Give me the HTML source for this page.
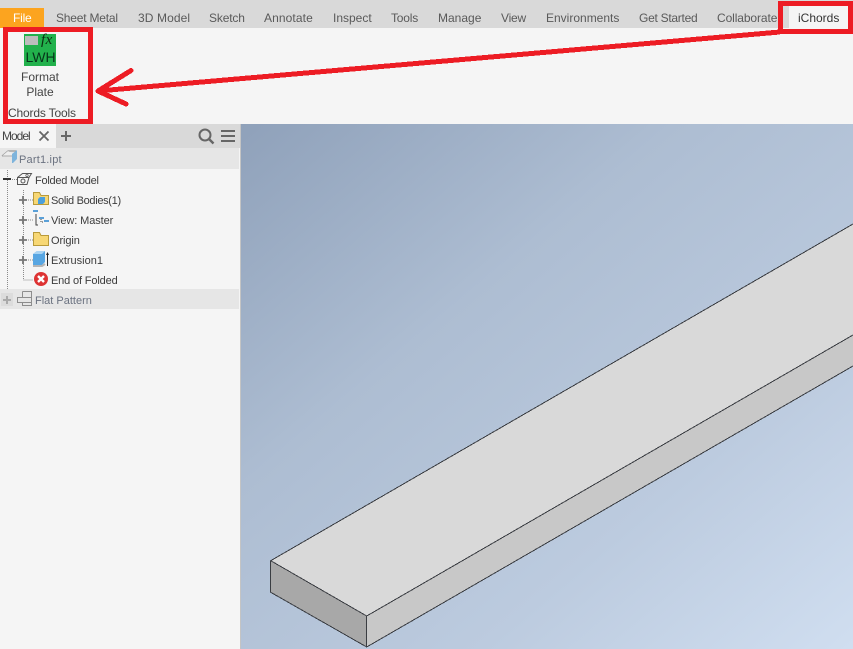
<!DOCTYPE html>
<html><head><meta charset="utf-8">
<style>
html,body{margin:0;padding:0}
body{width:853px;height:649px;position:relative;overflow:hidden;background:#f5f5f5;font-family:"Liberation Sans",sans-serif;}
.a{position:absolute;white-space:nowrap}
.tab{position:absolute;top:11px;font-size:12px;line-height:15px;color:#5a5a5a;white-space:nowrap}
.tree{position:absolute;font-size:11px;line-height:14px;color:#3c3c3c;white-space:nowrap}
</style></head><body>
<div class="a" style="left:0;top:0;width:853px;height:28px;background:#d9d9d9"></div>
<div class="a" style="left:0;top:8px;width:44px;height:20px;background:#fca41f"></div>
<div class="tab" style="left:13px;color:#fff;letter-spacing:-.2px">File</div>
<div class="tab" style="left:56px;letter-spacing:-.2px">Sheet Metal</div>
<div class="tab" style="left:138px;letter-spacing:.1px">3D Model</div>
<div class="tab" style="left:209px;letter-spacing:-.15px">Sketch</div>
<div class="tab" style="left:264px;letter-spacing:.1px">Annotate</div>
<div class="tab" style="left:333px">Inspect</div>
<div class="tab" style="left:391px;letter-spacing:-.2px">Tools</div>
<div class="tab" style="left:438px">Manage</div>
<div class="tab" style="left:501px;letter-spacing:-.2px">View</div>
<div class="tab" style="left:546px">Environments</div>
<div class="tab" style="left:639px;letter-spacing:-.27px">Get Started</div>
<div class="tab" style="left:717px;letter-spacing:-.1px">Collaborate</div>
<div class="a" style="left:789px;top:5px;width:64px;height:23px;background:#f5f5f5"></div>
<div class="tab" style="left:798px;color:#333">iChords</div>

<!-- ribbon button -->
<div class="a" style="left:24px;top:34px;width:32px;height:32px;background:#22b14c"></div>
<div class="a" style="left:25px;top:36px;width:13px;height:9px;background:#bdbdbd"></div>
<div class="a" style="left:41px;top:32px;font:italic 15px 'Liberation Serif',serif;line-height:16px;color:#0c2a10;letter-spacing:.5px">fx</div>
<div class="a" style="left:25.500px;top:49px;font-size:14px;line-height:16px;color:#06331a">LWH</div>
<div class="a" style="left:0;width:80px;top:70px;text-align:center;font-size:12px;line-height:15px;color:#444">Format<br>Plate</div>
<div class="a" style="left:8px;top:106px;font-size:12px;line-height:15px;color:#444;letter-spacing:-.17px">Chords Tools</div>

<!-- browser header -->
<div class="a" style="left:0;top:124px;width:240px;height:525px;background:#f5f5f5"></div>
<div class="a" style="left:56px;top:124px;width:184px;height:24px;background:#d9d9d9"></div>
<div class="a" style="left:2px;top:129px;font-size:12px;line-height:15px;color:#444;letter-spacing:-1px">Model</div>
<svg class="a" style="left:0;top:123px" width="240" height="25" fill="none" stroke="#666" stroke-width="1.8">
<path d="M39.500 8.500l9 9M48.500 8.500l-9 9"/>
<path d="M61 13h10M66 8v10" stroke-width="2"/>
<circle cx="205" cy="12" r="5.500" stroke-width="2"/><path d="M209 16l4.500 4.500" stroke-width="2.400"/>
<path d="M221 8h14M221 13h14M221 18h14" stroke-width="2"/>
</svg>

<!-- tree -->
<div class="a" style="left:0;top:148px;width:239px;height:21px;background:#e6e6e6"></div>
<div class="a" style="left:0;top:289px;width:239px;height:20px;background:#e6e6e6"></div>
<div class="a" style="left:1px;top:293px;width:12px;height:13px;background:#dcdcdc"></div>
<svg class="a" style="left:0;top:149px" width="240" height="165" fill="none">
<path d="M7.500 21V141M23.500 41V131M23.500 131H33M12 30.500H17M28 51H33M28 71H33M28 91H33M28 111H33" stroke="#8a8a8a" stroke-dasharray="1 1"/>
<path d="M3 30H11" stroke="#333" stroke-width="2"/>
<path d="M19 51h8M23 47v8M19 71h8M23 67v8M19 91h8M23 87v8M19 111h8M23 107v8" stroke="#777" stroke-width="1.800"/>
<path d="M3 151h8M7 147v8" stroke="#aaa" stroke-width="2"/>
<!-- part -->
<path d="M2 7L8 2H16" stroke="#9a9a9a" stroke-width="1.200"/>
<path d="M2 7H12V4L8 2Z" fill="#eee"/>
<path d="M2 7H12" stroke="#9a9a9a" stroke-width=".8"/>
<path d="M12 5L17 1V10L13 14H12Z" fill="#7eb4dc"/>
<!-- folded model -->
<path d="M17.500 28.500L22.500 24.500H31.500L29 28.500L27 35.500H17.500ZM17.500 28.500H29" stroke="#555" fill="#f5f5f5"/>
<circle cx="23" cy="32" r="2" stroke="#555"/><circle cx="27" cy="26.500" r="1.200" stroke="#555" stroke-width=".7"/>
<!-- folder solid -->
<path d="M33.500 43.500V55.500H48.500V46.500H41L39.500 43.500Z" fill="#f7d774" stroke="#b99a3a"/>
<path d="M38 50l2-2h5v5l-2 2h-5z" fill="#4b9fdc"/>
<!-- view -->
<path d="M36 65v11h2" stroke="#444"/><path d="M41 70v3h2" stroke="#444" stroke-dasharray="1 1"/>
<rect x="33" y="61" width="5" height="2" fill="#5aa0d8"/><rect x="39" y="68" width="5" height="2" fill="#5aa0d8"/><rect x="44" y="71" width="5" height="2" fill="#5aa0d8"/>
<!-- origin -->
<path d="M33.500 83.500V96.500H48.500V86.500H41L39.500 83.500Z" fill="#f7d774" stroke="#b99a3a"/>
<!-- extrusion -->
<path d="M33 105l4-3h8v11l-3 3H33z" fill="#58a6e2"/>
<path d="M33 105l4-3h8l-3 3z" fill="#a9d3f2"/>
<path d="M33 117h9l3-2" stroke="#b5b5b5" stroke-width="2"/>
<path d="M47.500 104V117" stroke="#222"/><path d="M46 106l1.500-3 1.500 3z" fill="#222"/>
<!-- error -->
<circle cx="41" cy="130" r="7" fill="#dd3333"/>
<path d="M38 127l6 6M44 127l-6 6" stroke="#fff" stroke-width="2.400"/>
<!-- flat pattern -->
<path d="M22.500 142.500H31.500V148.500M22.500 142.500V148.500M17.500 148.500H31.500V153.500H17.500ZM22.500 153.500V156.500H31.500V153.500" stroke="#8d8d8d"/>
</svg>
<div class="tree" style="left:19px;top:153px;color:#6b7280;letter-spacing:.2px">Part1.ipt</div>
<div class="tree" style="left:35px;top:174px;letter-spacing:-.25px">Folded Model</div>
<div class="tree" style="left:51px;top:194px;letter-spacing:-.32px">Solid Bodies(1)</div>
<div class="tree" style="left:51px;top:214px;letter-spacing:-.1px">View: Master</div>
<div class="tree" style="left:51px;top:234px;letter-spacing:-.1px">Origin</div>
<div class="tree" style="left:51px;top:254px">Extrusion1</div>
<div class="tree" style="left:51px;top:274px;letter-spacing:-.15px">End of Folded</div>
<div class="tree" style="left:35px;top:294px;color:#6b7280">Flat Pattern</div>

<!-- viewport -->
<div class="a" style="left:240px;top:124px;width:613px;height:525px;background:linear-gradient(140deg,#8fa1ba 0%,#adbdd2 35%,#bccbdf 70%,#d0def0 100%);border-left:1px solid #c4c4c4;box-sizing:border-box"></div>
<svg class="a" style="left:0;top:0" width="853" height="649">
<polygon points="270.700,560.700 853,224 853,335 366.700,616" fill="#d9d9d9"/>
<polygon points="270.700,560.700 366.700,616 366.700,647 270.700,592.300" fill="#a8a8a8"/>
<polygon points="366.700,616 853,335 853,366 366.700,647" fill="#c8c8c8"/>
<path d="M853 224L270.700 560.700L366.700 616L853 335M270.700 560.700V592.300L366.700 647L853 366M366.700 616V647" fill="none" stroke="#3a3d42" stroke-width="1" shape-rendering="crispEdges"/>
<!-- annotations -->
<g fill="none" stroke="#ed1c24" shape-rendering="crispEdges">
<rect x="5.500" y="29.500" width="85" height="92" stroke-width="5"/>
<rect x="780.500" y="3.500" width="70" height="28" stroke-width="5"/>
<path d="M780 32L98 91" stroke-width="5"/>
<path d="M131 70.500L98 91L126 104" stroke-width="5" stroke-linecap="round" stroke-linejoin="round"/>
</g>
</svg>
</body></html>
